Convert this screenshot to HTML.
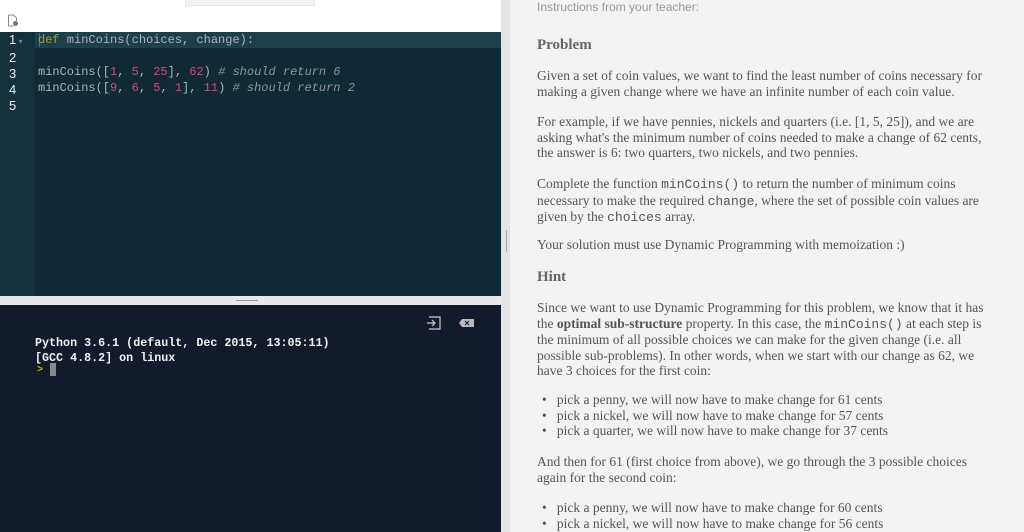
<!DOCTYPE html>
<html><head><meta charset="utf-8"><style>
*{margin:0;padding:0;box-sizing:border-box}
body{width:1024px;height:532px;overflow:hidden;position:relative;background:#fff;font-family:"Liberation Serif",serif}
.a{position:absolute;white-space:pre}
#ed{position:absolute;left:0;top:32px;width:501px;height:264px;background:#0f2a36}
#gut{position:absolute;left:0;top:32px;width:35px;height:264px;background:#13303d}
.code{font-family:"Liberation Mono",monospace;font-size:12px;color:#a9b5bc;line-height:16px}
.ln{font-family:"Liberation Sans",sans-serif;font-size:13px;color:#e8edf0;line-height:16px}
.n{color:#e0457b}.c{color:#8a979e;font-style:italic}.k{color:#9fa51c}
#term{position:absolute;left:0;top:305px;width:501px;height:227px;background:#121a2b}
.t{font-family:"Liberation Mono",monospace;font-size:11.7px;font-weight:bold;color:#f2f2f2;line-height:15px}
#rp{position:absolute;left:501px;top:0;width:523px;height:532px;background:#f3f3f3}
.p{font-size:13.5px;color:#555;line-height:15.5px}
.m{font-family:"Liberation Mono",monospace;font-size:13px}
.h{font-size:15px;font-weight:bold;color:#666}
</style></head><body>
<div class="a" style="left:185px;top:0;width:130px;height:6px;background:#f3f3f3;border:1px solid #e6e6e6;border-top:0"></div>
<svg class="a" style="left:7px;top:14px" width="12" height="13" viewBox="0 0 12 13"><path d="M1.5 1h5l3 3v3" fill="none" stroke="#888"/><path d="M1.5 1v11h5" fill="none" stroke="#888"/><circle cx="8.5" cy="9.5" r="2.5" fill="#777"/></svg>
<div id="ed"></div><div id="gut"></div>
<div class="a" style="left:35px;top:32px;width:466px;height:16px;background:#1f3e4b"></div>
<div class="a" style="left:39px;top:33px;width:1px;height:14px;background:#d33"></div>
<div class="a ln" style="left:9px;top:32px">1<span style="color:#6a8390;font-size:8px"> ▾</span>
2
3
4
5</div>
<div class="a code" style="left:38px;top:32px"><span class="k">def</span> minCoins(choices, change):

minCoins([<span class="n">1</span>, <span class="n">5</span>, <span class="n">25</span>], <span class="n">62</span>) <span class="c"># should return 6</span>
minCoins([<span class="n">9</span>, <span class="n">6</span>, <span class="n">5</span>, <span class="n">1</span>], <span class="n">11</span>) <span class="c"># should return 2</span>
</div>
<div class="a" style="left:0;top:296px;width:501px;height:9px;background:#e8e8e8"></div>
<div class="a" style="left:236px;top:300px;width:22px;height:1px;background:#999"></div>
<div id="term"></div>
<svg class="a" style="left:427px;top:316px" width="48" height="14" viewBox="0 0 48 14"><path d="M2 1h11v12H2M0 7h8M5 4l3 3-3 3" fill="none" stroke="#ccc" stroke-width="1.2"/><path d="M32 7l3-4h12v8H35z" fill="#bbb"/><path d="M38 5l4 4M42 5l-4 4" stroke="#121a2b" stroke-width="1"/></svg>
<div class="a t" style="left:35px;top:336px">Python 3.6.1 (default, Dec 2015, 13:05:11)
[GCC 4.8.2] on linux</div>
<div class="a" style="left:37px;top:365px;color:#e5b400;font-size:10px;font-family:'Liberation Mono',monospace;font-weight:bold">&gt;</div>
<div class="a" style="left:50px;top:363px;width:6px;height:13px;background:#888"></div>
<div id="rp"></div>
<div class="a" style="left:501px;top:0;width:9px;height:532px;background:#e4e4e4"></div>
<div class="a" style="left:506px;top:230px;width:1px;height:22px;background:#aaa"></div>
<div class="a" style="left:537px;top:0;font-family:'Liberation Sans',sans-serif;font-size:12px;color:#999">Instructions from your teacher:</div>
<div class="a h" style="left:537px;top:37px">Problem</div>
<div class="a p" style="left:537px;top:68px">Given a set of coin values, we want to find the least number of coins necessary for
making a given change where we have an infinite number of each coin value.</div>
<div class="a p" style="left:537px;top:114px">For example, if we have pennies, nickels and quarters (i.e. [1, 5, 25]), and we are
asking what's the minimum number of coins needed to make a change of 62 cents,
the answer is 6: two quarters, two nickels, and two pennies.</div>
<div class="a p" style="left:537px;top:176px">Complete the function <span class="m">minCoins()</span> to return the number of minimum coins
necessary to make the required <span class="m">change</span>, where the set of possible coin values are
given by the <span class="m">choices</span> array.</div>
<div class="a p" style="left:537px;top:237px">Your solution must use Dynamic Programming with memoization :)</div>
<div class="a h" style="left:537px;top:269px">Hint</div>
<div class="a p" style="left:537px;top:300px">Since we want to use Dynamic Programming for this problem, we know that it has
the <b>optimal sub-structure</b> property. In this case, the <span class="m">minCoins()</span> at each step is
the minimum of all possible choices we can make for the given change (i.e. all
possible sub-problems). In other words, when we start with our change as 62, we
have 3 choices for the first coin:</div>
<div class="a p" style="left:542px;top:392px">•   pick a penny, we will now have to make change for 61 cents
•   pick a nickel, we will now have to make change for 57 cents
•   pick a quarter, we will now have to make change for 37 cents</div>
<div class="a p" style="left:537px;top:454px">And then for 61 (first choice from above), we go through the 3 possible choices
again for the second coin:</div>
<div class="a p" style="left:542px;top:500px">•   pick a penny, we will now have to make change for 60 cents
•   pick a nickel, we will now have to make change for 56 cents</div>
</body></html>
